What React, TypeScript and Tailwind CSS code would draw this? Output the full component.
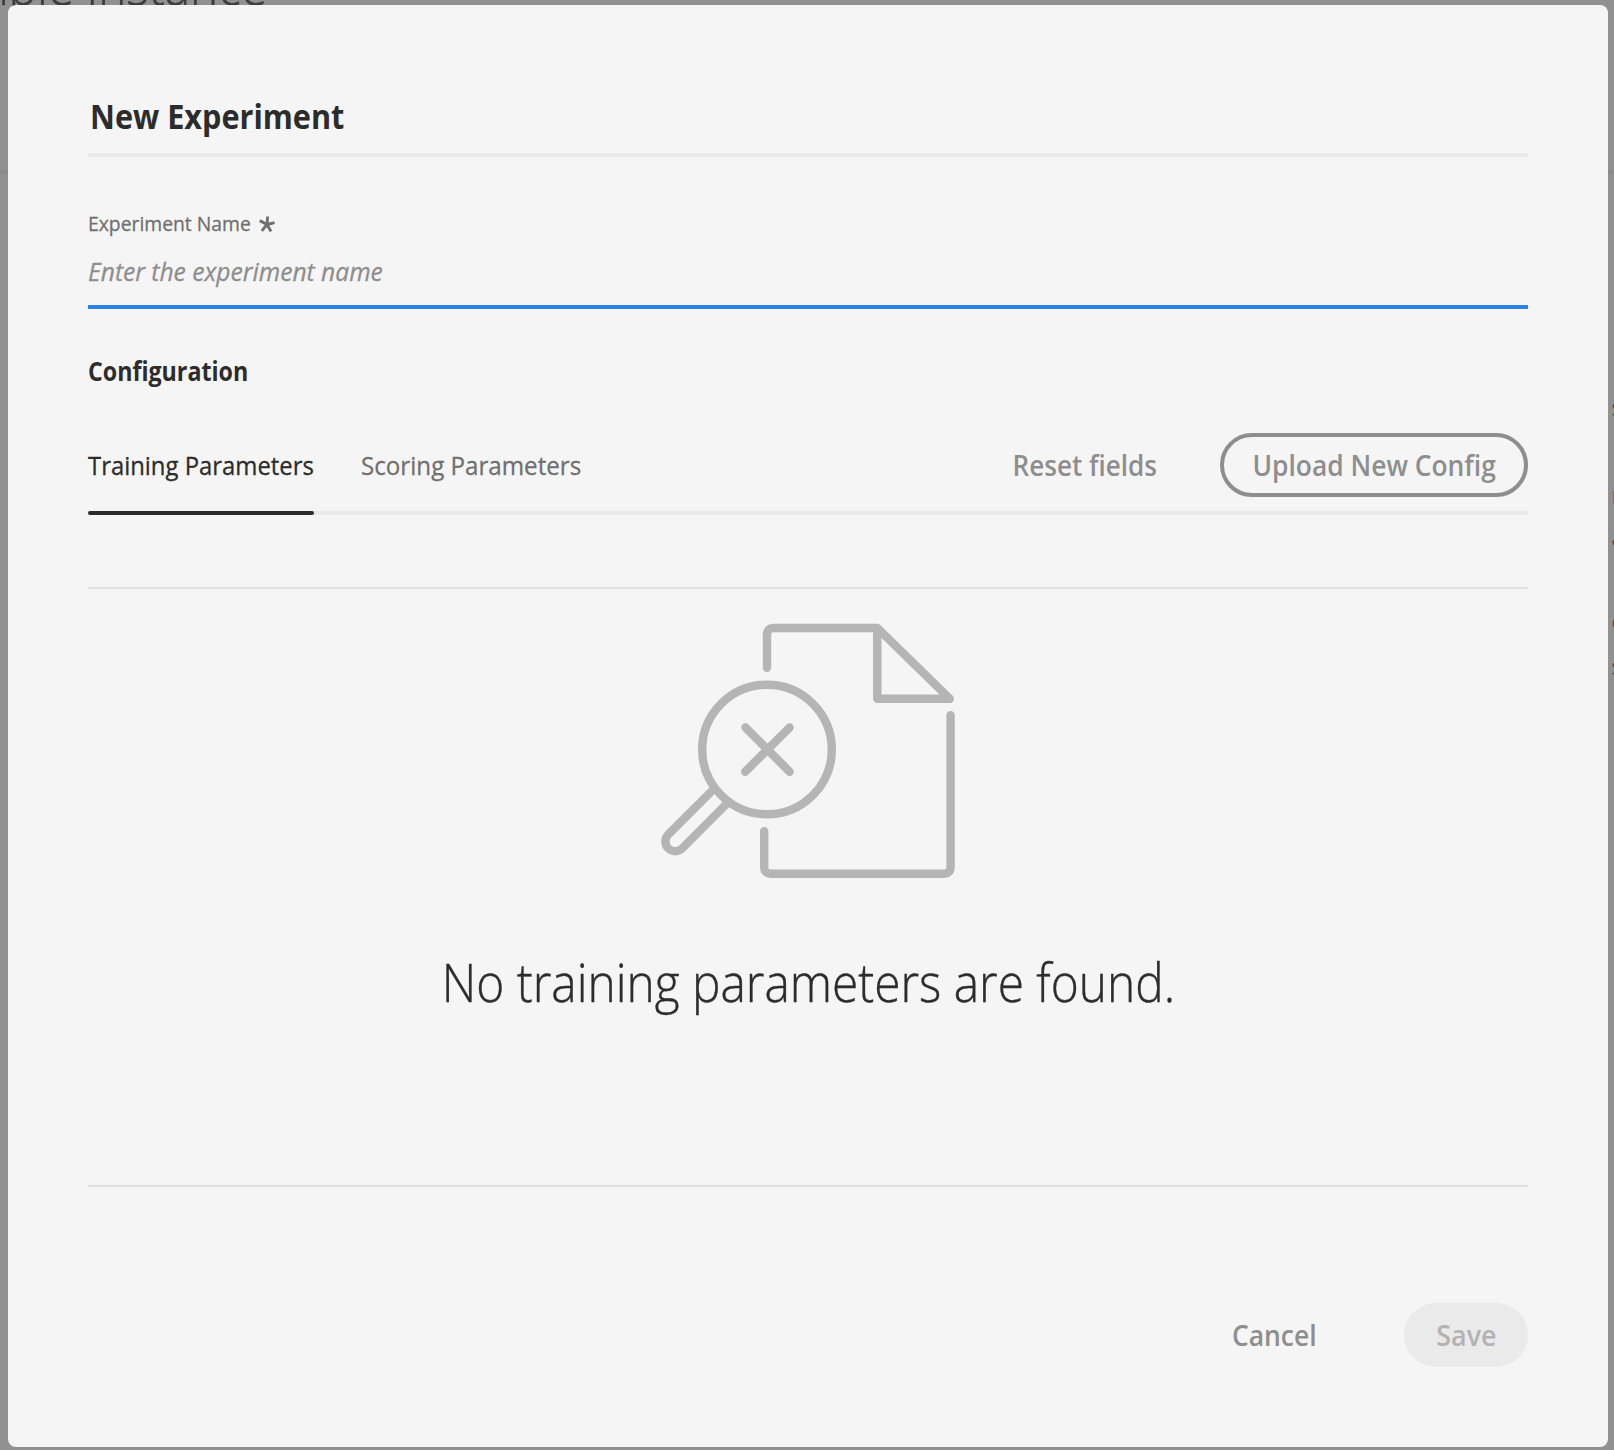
function EmptyIllustration() {
  return (
    <svg width="340" height="300" viewBox="0 0 340 300" fill="none" stroke="#b5b5b5" strokeWidth="8.4" strokeLinecap="round" strokeLinejoin="round">
      <path d="M127 67.7V34a6 6 0 0 1 6-6H237.3L309.8 98.8H237.3V28" />
      <path d="M310.6 115.3V267.8a6 6 0 0 1-6 6H130.2a6 6 0 0 1-6-6V231.3" />
      <circle cx="127" cy="149.5" r="64.8" />
      <path d="M105.5 127.5L149.6 171.7M149.6 127.5L105.2 171.7" />
      <path strokeLinecap="butt" d="M74.2 188.6L28.3 234.5A9.8 9.8 0 1 0 42.2 248.4L87.8 202.6" />
    </svg>
  );
}

function BackgroundPage() {
  return (
    <div className="absolute inset-0 overflow-hidden">
      <div className="flex h-[170px] w-[267px] items-start justify-end">
        <h1 className="-mt-[51px] origin-right scale-x-90 text-[53px] leading-[72px] font-light whitespace-nowrap text-[#3c3c3c] [-webkit-text-stroke:0.5px]">Sample Instance</h1>
      </div>
      <div className="h-1 bg-[#8a8a8a]" />
      <div className="mt-[217px] ml-[1611.5px] flex flex-col text-[24px] leading-8 text-[#4f4437]">
        <span>s</span>
        <span className="mt-[56px]">r</span>
        <span className="mt-[10px]">a</span>
        <span className="mt-[52px]">e</span>
        <span className="mt-[13px]">s</span>
      </div>
    </div>
  );
}

export default function App() {
  return (
    <div className="relative h-[1450px] w-[1614px] overflow-hidden bg-[#919191] font-['Open_Sans',sans-serif] text-[#2c2c2c]">
      <BackgroundPage />
      <div className="relative mt-[5px] ml-2 flex h-[1442px] w-[1600px] flex-col rounded-lg bg-[#f5f5f5] px-20">
        <header className="mt-[88px] h-[64px] border-b-4 border-[#eaeaea] pl-[2px]">
          <h2 className="origin-left scale-x-[0.912] text-[33.6px] leading-[47px] font-bold">New Experiment</h2>
        </header>

        <label className="mt-[52px] flex h-[28px] items-center text-[20.5px] leading-7 text-[#707070]">
          <span className="w-[162px] origin-left scale-x-[0.942] whitespace-nowrap [-webkit-text-stroke:0.3px]">Experiment Name</span>
          <svg className="mt-px ml-[9px]" width="16" height="16" viewBox="0 0 16 16" stroke="#707070" strokeWidth="2.9">
            <path d="M8 8.5L8.6 0.5M8 8.5L0.7 4.6M8 8.5L15.6 6.6M8 8.5L12 15.4M8 8.5L2.8 14.8" />
          </svg>
        </label>
        <div className="mt-px flex h-[71px] border-b-4 border-[#2d82e8]">
          <input
            className="w-full origin-left scale-x-[0.946] text-[26px] italic outline-none [-webkit-text-stroke:0.3px] placeholder:text-[#8e8e8e]"
            placeholder="Enter the experiment name"
          />
        </div>

        <h3 className="mt-[44px] origin-left scale-x-[0.893] text-[26px] leading-[36px] font-bold">Configuration</h3>

        <div className="mt-[44px] flex h-[82px] items-start border-b-4 border-[#eaeaea]">
          <button className="relative flex h-[82px] w-[226px] items-center pb-[18px] text-[26px] whitespace-nowrap">
            <span className="origin-left scale-x-[0.918] [-webkit-text-stroke:0.3px]">Training Parameters</span>
            <span className="absolute bottom-0 left-0 h-1 w-full rounded-sm bg-[#2c2c2c]" />
          </button>
          <button className="ml-[47px] flex h-[82px] w-[221px] items-center pb-[18px] text-[26px] whitespace-nowrap text-[#707070]">
            <span className="origin-left scale-x-[0.929] [-webkit-text-stroke:0.3px]">Scoring Parameters</span>
          </button>
          <div className="ml-auto flex">
            <button className="mr-[63px] h-16 origin-right scale-x-[0.932] text-[28px] font-semibold text-[#8e8e8e]">Reset fields</button>
            <button className="flex h-16 w-[308px] items-center justify-center rounded-full border-4 border-[#8e8e8e] text-[28px] font-semibold text-[#8e8e8e]">
              <span className="scale-x-[0.942]">Upload New Config</span>
            </button>
          </div>
        </div>

        <section className="mt-[72px] flex h-[600px] flex-col items-center border-y-2 border-[#e1e1e1]">
          <div className="mt-[11px] mr-[-4px]">
            <EmptyIllustration />
          </div>
          <p className="mt-[46px] scale-x-[0.902] text-[53px] leading-[72px] font-light whitespace-nowrap [-webkit-text-stroke:0.4px]">No training parameters are found.</p>
        </section>

        <footer className="mt-[116px] flex items-center justify-end">
          <button className="mr-[87px] h-16 origin-right scale-x-[0.945] text-[28px] font-semibold text-[#8e8e8e]">Cancel</button>
          <button className="flex h-16 w-[124px] items-center justify-center rounded-full bg-[#eaeaea] text-[28px] font-semibold text-[#b3b3b3]">
            <span className="scale-x-[0.96]">Save</span>
          </button>
        </footer>
      </div>
    </div>
  );
}
